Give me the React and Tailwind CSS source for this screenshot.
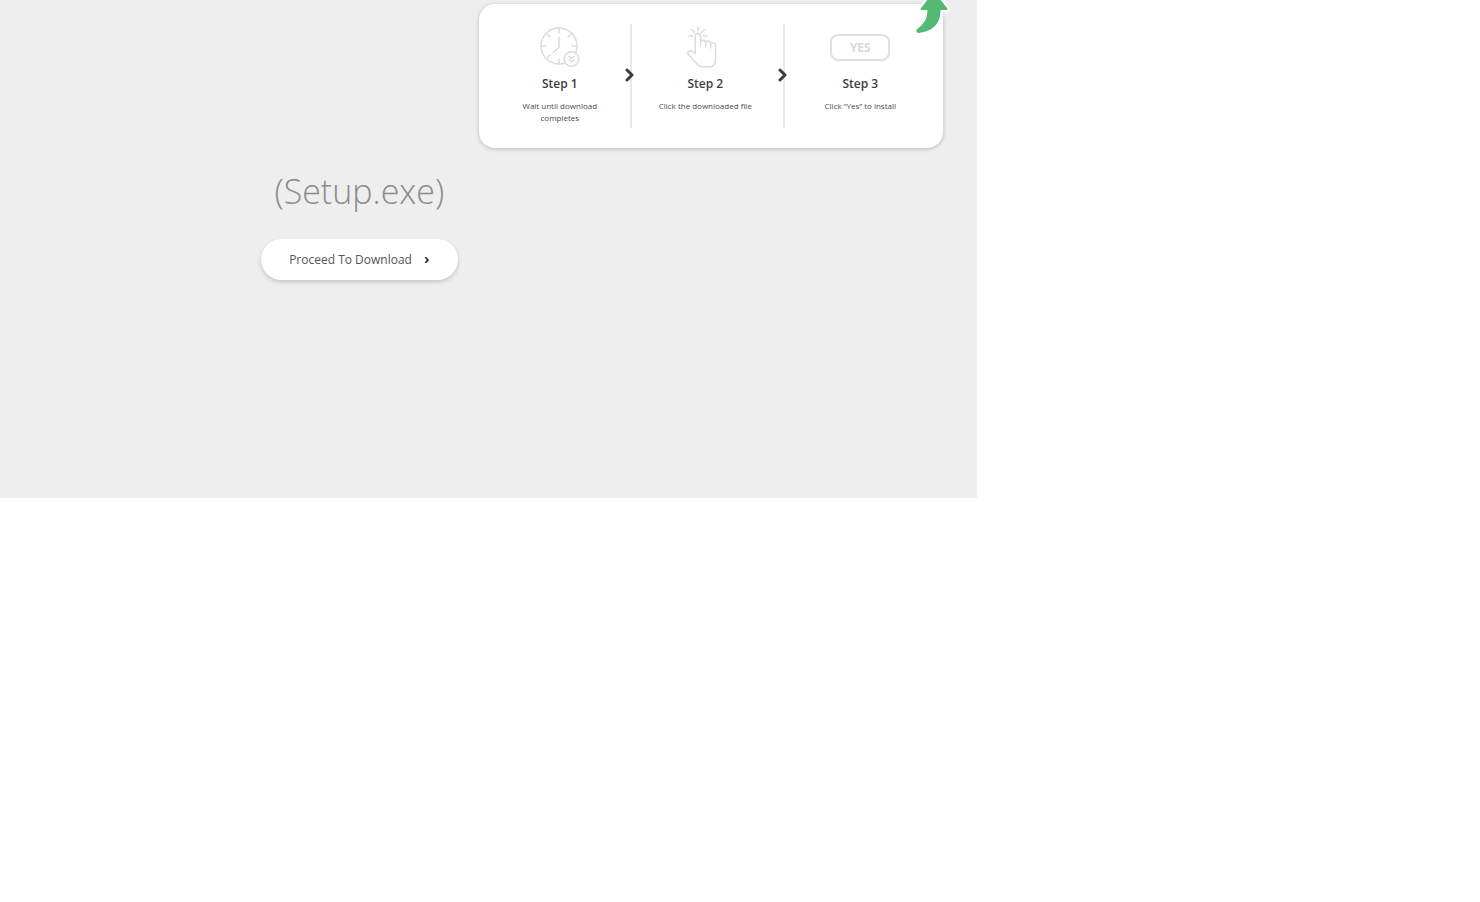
function ClockIcon() {
  return (
    <svg width="40" height="40" viewBox="0 0 40 40" fill="none" stroke="#dcdcdc" strokeWidth="1.5" strokeLinecap="round" strokeLinejoin="round">
      <circle cx="19" cy="19" r="18" />
      <path d="M19 2v4M19 32v4M2 19h4M32 19h4M7.5 7.5l2.5 2.5M30.5 7.5L28 10M7.5 30.5L10 28" />
      <path d="M19 10v10l-5.5 5.5" />
      <circle cx="31.5" cy="32" r="7.3" fill="white" />
      <path d="M29 29.5l2.5 2 2.5-2M29 33l2.5 2 2.5-2" />
    </svg>
  );
}

function TapIcon() {
  return (
    <svg className="mr-1.5" width="30" height="42" viewBox="0 0 30 42" fill="none" stroke="#dcdcdc" strokeWidth="1.5" strokeLinecap="round" strokeLinejoin="round">
      <path d="M11 1v3.5M4.5 3.5l3 3M17.5 3.5l-3 3M2 10h3.5M16.5 10H20" />
      <path d="M8.2 27.5V10.2a2.7 2.7 0 0 1 5.4 0V20M13.6 16.5a2.5 2.5 0 0 1 5 0V21M18.6 17.5a2.5 2.5 0 0 1 5 0V22M23.6 19.3a2.5 2.5 0 0 1 5 0V33c0 5-2.5 7.8-6 7.8H15c-1.6 0-2.8-.6-3.8-1.6L1.8 28.8c-2-2.6.8-5.5 3.2-3.8l3.2 2.5" />
    </svg>
  );
}

function YesIcon() {
  return (
    <span className="mt-0.5 flex h-[27px] w-[60px] items-center justify-center rounded-lg border-2 border-[#e0e0e0] pt-px text-[12px] font-bold text-[#d8d8d8]">
      YES
    </span>
  );
}

function CurvedArrow() {
  return (
    <svg className="absolute -top-[13px] -right-2 overflow-visible" width="36" height="44" viewBox="0 0 36 44" strokeLinejoin="round">
      <path d="M19 2L31.5 18H24.5C25 30 19 39 3.5 41C2 41 2 39.5 3 38.7C10.5 33 13.5 28 13.5 18H6.5Z" fill="white" stroke="white" strokeWidth="7" />
      <path d="M19 2L31.5 18H24.5C25 30 19 39 3.5 41C2 41 2 39.5 3 38.7C10.5 33 13.5 28 13.5 18H6.5Z" fill="#55b976" stroke="#55b976" strokeWidth="2" />
    </svg>
  );
}

function Divider() {
  return (
    <div className="relative h-[104px] w-0.5 bg-[#e9e9e9]">
      <svg className="absolute top-11 -left-[5px]" width="9" height="14" viewBox="0 0 9 14" fill="none" stroke="#3d3d3d" strokeWidth="3" strokeLinecap="round" strokeLinejoin="round">
        <path d="M2 2l5 5-5 5" />
      </svg>
    </div>
  );
}

function Step({ icon, title, text, className }) {
  return (
    <li className={`flex flex-col items-center text-center ${className}`}>
      <div className="flex h-[45px] items-center justify-center">{icon}</div>
      <h2 className="mt-[7px] text-[12px] leading-4 font-semibold text-[#3d3d3d]">{title}</h2>
      <p className="mt-2 max-w-24 text-[8px] leading-3 text-[#4a4a4a]">{text}</p>
    </li>
  );
}

export default function App() {
  return (
    <div className="min-h-screen bg-white font-['Open_Sans',sans-serif]">
      <main className="flex min-h-[498px] w-[66%] items-start justify-end gap-[21px] bg-[#eeeeee] pt-1 pr-[34px]">
        <section className="flex flex-col items-center pt-[163px]">
          <h1 className="text-[34px] leading-12 font-light text-[#8c8c8c]">(Setup.exe)</h1>
          <button type="button" className="mt-6 flex h-[41px] w-[197px] items-center justify-center gap-3 rounded-full bg-white text-[12px] text-[#555555] shadow-[0_2px_4px_rgba(0,0,0,0.18)]">
            Proceed To Download
            <span className="pb-1 text-[15px] leading-4 font-bold text-[#333333]">›</span>
          </button>
        </section>

        <section className="relative rounded-2xl bg-white pt-5 pr-[7px] pb-5 pl-[11px] shadow-[0_1px_4px_rgba(0,0,0,0.22)]">
          <CurvedArrow />
          <ol className="flex">
            <Step icon={<ClockIcon />} title="Step 1" text="Wait until download completes" className="w-[140px]" />
            <Divider />
            <Step icon={<TapIcon />} title="Step 2" text="Click the downloaded file" className="w-[151px] pr-1" />
            <Divider />
            <Step icon={<YesIcon />} title="Step 3" text="Click “Yes” to install" className="w-[151px]" />
          </ol>
        </section>
      </main>
    </div>
  );
}
